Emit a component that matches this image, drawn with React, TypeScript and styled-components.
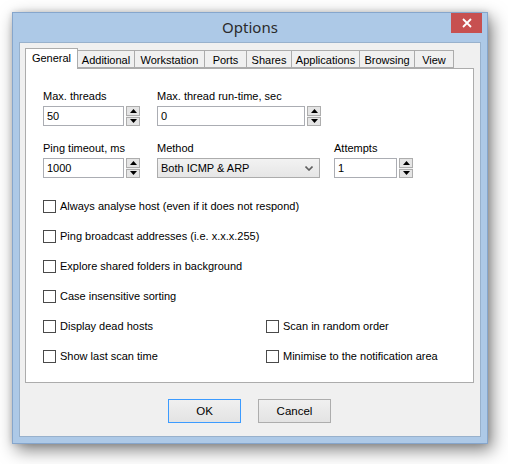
import styled, { createGlobalStyle } from "styled-components";

const GlobalStyle = createGlobalStyle`
  html, body {
    margin: 0;
    padding: 0;
    background: #ffffff;
  }
  body {
    font-family: "Liberation Sans", Arial, sans-serif;
    font-size: 11px;
    color: #000;
  }
`;

const Page = styled.div`
  width: 508px;
  height: 464px;
  padding: 12px 0 0 12px;
  box-sizing: border-box;
`;

const Window = styled.div`
  width: 476px;
  height: 432px;
  box-sizing: border-box;
  border: 1px solid #86a6cc;
  background: #adc9e7;
  box-shadow: 4px 6px 16px rgba(0, 0, 0, 0.5), 0 0 6px rgba(0, 0, 0, 0.15);
  display: flex;
  flex-direction: column;
  padding: 0 6px 6px 6px;
`;

const TitleBar = styled.div`
  height: 29px;
  position: relative;
  display: flex;
  align-items: center;
  justify-content: center;
`;

const Title = styled.div`
  font-family: "Noto Sans", "Open Sans", sans-serif;
  font-size: 15px;
  color: #2b2b2b;
  margin-top: -2px;
`;

const CloseButton = styled.div`
  position: absolute;
  top: 0;
  right: -1px;
  width: 31px;
  height: 20px;
  background: #c75050;
  display: flex;
  align-items: center;
  justify-content: center;
`;

const Client = styled.div`
  flex: 1;
  border: 1px solid #98b1cc;
  background: #f0f0f0;
  padding: 5px 6px 13px 5px;
  display: flex;
  flex-direction: column;
`;

const TabStrip = styled.div`
  display: flex;
  align-items: flex-end;
  height: 20px;
  position: relative;
  z-index: 1;
`;

const Tab = styled.div<{ $w: number; $active?: boolean }>`
  width: ${(p) => p.$w}px;
  height: ${(p) => (p.$active ? 21 : 18)}px;
  box-sizing: border-box;
  border: 1px solid #acacac;
  border-bottom: ${(p) => (p.$active ? "none" : "1px solid #acacac")};
  margin-right: -1px;
  background: ${(p) => (p.$active ? "#ffffff" : "#f0f0f0")};
  display: flex;
  align-items: center;
  justify-content: center;
  padding-top: ${(p) => (p.$active ? 0 : 1)}px;
  padding-bottom: ${(p) => (p.$active ? 2 : 0)}px;
  margin-bottom: ${(p) => (p.$active ? -1 : 0)}px;
  white-space: nowrap;
`;

const Panel = styled.div`
  height: 315px;
  box-sizing: border-box;
  border: 1px solid #acacac;
  background: #ffffff;
  padding: 21px 0 0 17px;
`;

const FieldGrid = styled.div`
  display: grid;
  grid-template-columns: 114px 177px auto;
  row-gap: 16px;
`;

const Field = styled.div`
  display: flex;
  flex-direction: column;
  gap: 3px;
`;

const Label = styled.div`
  height: 13px;
  line-height: 13px;
  white-space: nowrap;
`;

const InputRow = styled.div`
  display: flex;
  align-items: center;
  gap: 2px;
`;

const TextBox = styled.div<{ $w: number }>`
  width: ${(p) => p.$w}px;
  height: 20px;
  box-sizing: border-box;
  border: 1px solid #abadb3;
  background: #fff;
  padding-left: 3px;
  display: flex;
  align-items: center;
`;

const Spin = styled.div`
  width: 14px;
  height: 20px;
  display: flex;
  flex-direction: column;
  gap: 1px;
  background: #f0f0f0;
`;

const SpinButton = styled.div`
  flex: 1;
  box-sizing: border-box;
  border: 1px solid #adadad;
  background: #e5e5e5;
  display: flex;
  align-items: center;
  justify-content: center;
`;

const Select = styled.div<{ $w: number }>`
  width: ${(p) => p.$w}px;
  height: 20px;
  box-sizing: border-box;
  border: 1px solid #acacac;
  background: linear-gradient(#f2f2f2, #e6e6e6);
  padding: 0 6px 0 3px;
  display: flex;
  align-items: center;
  justify-content: space-between;
`;

const CheckList = styled.div`
  margin-top: 20px;
  display: grid;
  grid-template-columns: 223px auto;
  row-gap: 14px;
`;

const CheckRow = styled.label<{ $wide?: boolean }>`
  grid-column: ${(p) => (p.$wide ? "1 / span 2" : "auto")};
  height: 16px;
  display: flex;
  align-items: center;
  gap: 4px;
  white-space: nowrap;
`;

const Box = styled.span`
  width: 13px;
  height: 13px;
  box-sizing: border-box;
  border: 1px solid #4a4a4a;
  background: #fff;
  flex-shrink: 0;
`;

const ButtonBar = styled.div`
  margin-top: 16px;
  display: flex;
  justify-content: center;
  gap: 17px;
`;

const Button = styled.div<{ $focused?: boolean }>`
  width: 73px;
  height: 24px;
  box-sizing: border-box;
  border: 1px solid ${(p) => (p.$focused ? "#3c9bff" : "#adadad")};
  background: linear-gradient(#f0f0f0, #e3e3e3);
  display: flex;
  align-items: center;
  justify-content: center;
  font-size: 11.5px;
`;

const Up = () => (
  <svg width="7" height="4" viewBox="0 0 7 4">
    <path d="M0 4 L3.5 0 L7 4 Z" fill="#000" />
  </svg>
);

const Down = () => (
  <svg width="7" height="4" viewBox="0 0 7 4">
    <path d="M0 0 L3.5 4 L7 0 Z" fill="#000" />
  </svg>
);

const Spinner = () => (
  <Spin>
    <SpinButton>
      <Up />
    </SpinButton>
    <SpinButton>
      <Down />
    </SpinButton>
  </Spin>
);

const tabs = [
  { name: "General", w: 53 },
  { name: "Additional", w: 58 },
  { name: "Workstation", w: 71 },
  { name: "Ports", w: 43 },
  { name: "Shares", w: 46 },
  { name: "Applications", w: 69 },
  { name: "Browsing", w: 56 },
  { name: "View", w: 40 },
];

export default function App() {
  return (
    <>
      <GlobalStyle />
      <Page>
        <Window>
          <TitleBar>
            <Title>Options</Title>
            <CloseButton>
              <svg width="10" height="10" viewBox="0 0 10 10">
                <path d="M1 1 L9 9 M9 1 L1 9" stroke="#fff" strokeWidth="1.8" />
              </svg>
            </CloseButton>
          </TitleBar>
          <Client>
            <TabStrip>
              {tabs.map((t, i) => (
                <Tab key={t.name} $w={t.w} $active={i === 0}>
                  {t.name}
                </Tab>
              ))}
            </TabStrip>
            <Panel>
              <FieldGrid>
                <Field>
                  <Label>Max. threads</Label>
                  <InputRow>
                    <TextBox $w={81}>50</TextBox>
                    <Spinner />
                  </InputRow>
                </Field>
                <Field>
                  <Label>Max. thread run-time, sec</Label>
                  <InputRow>
                    <TextBox $w={148}>0</TextBox>
                    <Spinner />
                  </InputRow>
                </Field>
                <div />
                <Field>
                  <Label>Ping timeout, ms</Label>
                  <InputRow>
                    <TextBox $w={81}>1000</TextBox>
                    <Spinner />
                  </InputRow>
                </Field>
                <Field>
                  <Label>Method</Label>
                  <InputRow>
                    <Select $w={163}>
                      <span>Both ICMP &amp; ARP</span>
                      <svg width="8" height="5" viewBox="0 0 8 5">
                        <path d="M0.5 0.5 L4 4 L7.5 0.5" stroke="#606060" strokeWidth="1.6" fill="none" />
                      </svg>
                    </Select>
                  </InputRow>
                </Field>
                <Field>
                  <Label>Attempts</Label>
                  <InputRow>
                    <TextBox $w={63}>1</TextBox>
                    <Spinner />
                  </InputRow>
                </Field>
              </FieldGrid>
              <CheckList>
                <CheckRow $wide>
                  <Box />
                  Always analyse host (even if it does not respond)
                </CheckRow>
                <CheckRow $wide>
                  <Box />
                  Ping broadcast addresses (i.e. x.x.x.255)
                </CheckRow>
                <CheckRow $wide>
                  <Box />
                  Explore shared folders in background
                </CheckRow>
                <CheckRow $wide>
                  <Box />
                  Case insensitive sorting
                </CheckRow>
                <CheckRow>
                  <Box />
                  Display dead hosts
                </CheckRow>
                <CheckRow>
                  <Box />
                  Scan in random order
                </CheckRow>
                <CheckRow>
                  <Box />
                  Show last scan time
                </CheckRow>
                <CheckRow>
                  <Box />
                  Minimise to the notification area
                </CheckRow>
              </CheckList>
            </Panel>
            <ButtonBar>
              <Button $focused>OK</Button>
              <Button>Cancel</Button>
            </ButtonBar>
          </Client>
        </Window>
      </Page>
    </>
  );
}
